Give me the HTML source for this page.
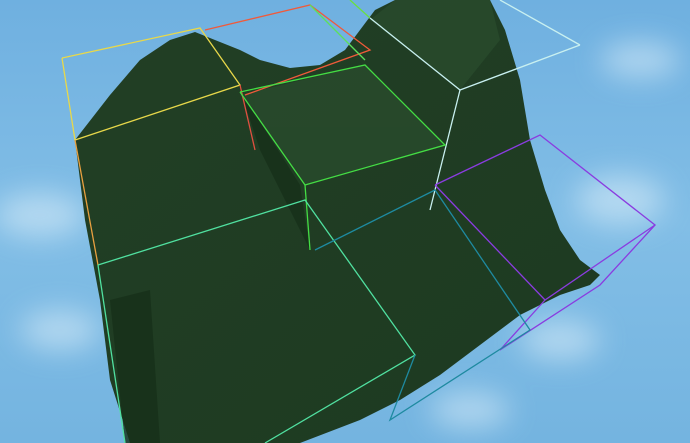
<!DOCTYPE html>
<html><head><meta charset="utf-8"><style>
html,body{margin:0;padding:0;width:690px;height:443px;overflow:hidden;background:#79b6e2}
</style></head><body>
<svg width="690" height="443" viewBox="0 0 690 443" xmlns="http://www.w3.org/2000/svg">
<defs>
<linearGradient id="sky" x1="0" y1="0" x2="0" y2="1">
<stop offset="0" stop-color="#6fb0e0"/><stop offset="0.5" stop-color="#82bee6"/><stop offset="1" stop-color="#74b4e0"/>
</linearGradient>
<filter id="blur" x="-50%" y="-50%" width="200%" height="200%"><feGaussianBlur stdDeviation="14"/></filter>
<linearGradient id="ter" x1="0" y1="0" x2="1" y2="1">
<stop offset="0" stop-color="#223f25"/><stop offset="1" stop-color="#1d3a21"/>
</linearGradient>
</defs>
<rect width="690" height="443" fill="url(#sky)"/>
<g filter="url(#blur)" fill="#d6ebf8" opacity="0.6">
<ellipse cx="40" cy="215" rx="45" ry="22"/>
<ellipse cx="620" cy="200" rx="45" ry="25"/>
<ellipse cx="560" cy="340" rx="40" ry="20"/>
<ellipse cx="60" cy="330" rx="40" ry="20"/>
<ellipse cx="640" cy="60" rx="40" ry="18"/>
<ellipse cx="470" cy="410" rx="40" ry="18"/>
</g>
<polygon fill="url(#ter)" points="75,140 110,95 140,60 170,40 195,32 215,40 240,50 260,60 290,68 320,65 345,50 360,30 375,10 395,0 490,0 505,30 520,80 530,140 545,190 560,230 580,260 600,275 590,285 560,295 520,315 480,345 440,375 400,400 360,420 300,443 130,443 110,380 100,300 85,220"/>
<g fill="#2a4d2e" opacity="0.7">
<polygon points="240,95 365,65 445,145 305,185"/>
<polygon points="370,20 460,90 500,40 490,0 395,0"/>
</g>
<g fill="#163019" opacity="0.8">
<polygon points="110,300 150,290 160,443 125,443"/>
<polygon points="240,90 300,185 310,250 260,150"/>
</g>
<g fill="none" stroke-width="1.3">
<polyline stroke="#e8d84a" points="62,58 200,28 240,85 75,140 62,58"/>
<line stroke="#e8a040" x1="75" y1="140" x2="98" y2="265"/>
<polyline stroke="#f05a3a" points="205,30 310,5 370,50 245,95"/>
<line stroke="#e05040" x1="240" y1="85" x2="255" y2="150"/>
<line stroke="#5ce05c" x1="310" y1="5" x2="365" y2="60"/>
<line stroke="#6ae040" x1="350" y1="0" x2="370" y2="18"/>
<polyline stroke="#c8f0f0" points="370,18 460,90 580,45"/>
<line stroke="#c8f0f0" x1="460" y1="90" x2="430" y2="210"/>
<line stroke="#c8f0f0" x1="500" y1="0" x2="580" y2="45"/>
<polyline stroke="#44dd44" points="240,92 365,65 445,145 305,185 240,92"/>
<line stroke="#44dd44" x1="305" y1="185" x2="310" y2="250"/>
<polyline stroke="#8a3ce0" points="435,185 540,135 655,225 545,300 435,185"/>
<polyline stroke="#8a3ce0" points="655,225 600,285 500,350"/>
<line stroke="#8a3ce0" x1="545" y1="300" x2="500" y2="350"/>
<polyline stroke="#50e0a0" points="98,265 305,200 415,355 265,443"/>
<line stroke="#50e0a0" x1="98" y1="265" x2="125" y2="443"/>
<polyline stroke="#1e8aa0" points="315,250 435,190 530,330 390,420 415,355"/>
</g>
</svg>
</body></html>
